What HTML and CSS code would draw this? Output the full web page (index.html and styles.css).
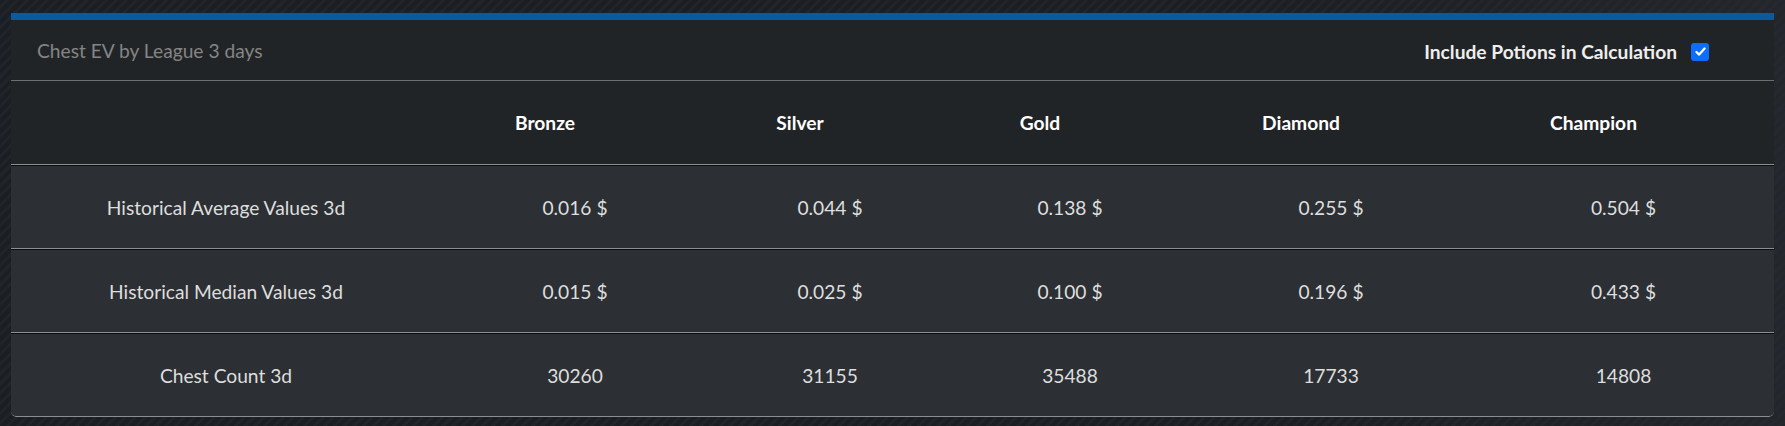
FILE: index.html
```html
<!DOCTYPE html>
<html lang="en">
<head>
<meta charset="utf-8">
<title>Chest EV by League</title>
<link rel="stylesheet" href="styles.css">
</head>
<body>
<div class="page">
  <section class="card">
    <header class="card-head">
      <h2 class="title">Chest EV by League 3 days</h2>
      <label class="toggle">
        <span class="toggle-text">Include Potions in Calculation</span>
        <span class="check">
          <svg viewBox="0 0 16 16" width="13" height="13"><path d="M3 8.6 L6.4 11.8 L13 4.4" fill="none" stroke="#fff" stroke-width="2.8" stroke-linecap="round" stroke-linejoin="round"/></svg>
        </span>
      </label>
    </header>
    <div class="table">
      <div class="row head">
        <div class="cell"></div>
        <div class="cell">Bronze</div>
        <div class="cell">Silver</div>
        <div class="cell">Gold</div>
        <div class="cell">Diamond</div>
        <div class="cell">Champion</div>
      </div>
      <div class="row body">
        <div class="cell">Historical Average Values 3d</div>
        <div class="cell">0.016 $</div>
        <div class="cell">0.044 $</div>
        <div class="cell">0.138 $</div>
        <div class="cell">0.255 $</div>
        <div class="cell">0.504 $</div>
      </div>
      <div class="row body">
        <div class="cell">Historical Median Values 3d</div>
        <div class="cell">0.015 $</div>
        <div class="cell">0.025 $</div>
        <div class="cell">0.100 $</div>
        <div class="cell">0.196 $</div>
        <div class="cell">0.433 $</div>
      </div>
      <div class="row body last">
        <div class="cell">Chest Count 3d</div>
        <div class="cell">30260</div>
        <div class="cell">31155</div>
        <div class="cell">35488</div>
        <div class="cell">17733</div>
        <div class="cell">14808</div>
      </div>
    </div>
  </section>
</div>
</body>
</html>
```

FILE: styles.css
```css
html, body {
  margin: 0;
  padding: 0;
}

body {
  width: 1785px;
  height: 426px;
  overflow: hidden;
  font-family: Lato, "Open Sans", "Liberation Sans", sans-serif;
  background-color: #1c1f23;
  background-image:
    linear-gradient(90deg, rgba(28,31,35,0) 0%, rgba(28,31,35,0) 70%, rgba(40,43,49,0.6) 100%),
    repeating-linear-gradient(135deg, #1b1e22 0px, #1b1e22 4px, #212428 4px, #212428 7px);
}

.page {
  padding: 13px 11px 0 11px;
}

.card {
  background: #212426;
  border-top: 7px solid #0b5a9c;
  border-radius: 0 0 5px 5px;
  overflow: hidden;
}

.card-head {
  height: 60px;
  border-bottom: 1px solid #6e6f70;
  display: flex;
  align-items: center;
  justify-content: space-between;
  padding: 0 65px 0 26px;
}

.title {
  margin: 0;
  font-size: 19.2px;
  font-weight: 400;
  color: #858585;
}

.toggle {
  display: flex;
  align-items: center;
  gap: 14px;
  margin-top: 3px;
}

.toggle-text {
  font-size: 19.2px;
  font-weight: 700;
  color: #eeeeee;
}

.check {
  width: 18px;
  height: 18px;
  border-radius: 3px;
  background: #0d6efd;
  display: flex;
  align-items: center;
  justify-content: center;
}

.table {
  display: flex;
  flex-direction: column;
}

.row {
  display: grid;
  grid-template-columns: 430px 268px 242px 238px 284px 1fr;
  align-items: center;
}

.row.head {
  height: 83px;
  background: #212426;
  border-bottom: 1px solid #8d8e8f;
}

.row.head .cell {
  font-weight: 700;
  color: #ffffff;
  padding-right: 60px;
}

.row.head .cell:first-child {
  padding-right: 0;
}

.row.body {
  height: 82px;
  background: #2c3034;
  border-top: 1px solid #0b0c0d;
  border-bottom: 1px solid #8d8e8f;
}

.row.body.last {
  border-radius: 0 0 5px 5px;
}

.cell {
  text-align: center;
  font-size: 19.2px;
  color: #dedede;
}
```
